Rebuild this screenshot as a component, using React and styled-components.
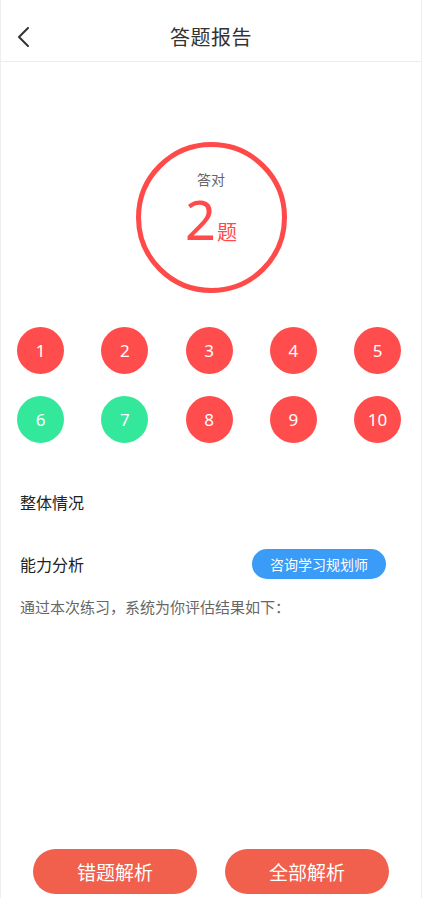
import React from 'react';
import styled, { createGlobalStyle } from 'styled-components';

const GlobalStyle = createGlobalStyle`
  html, body {
    margin: 0;
    padding: 0;
    background: #fff;
    font-family: "Noto Sans CJK SC", "Noto Sans", sans-serif;
  }
  * { box-sizing: border-box; }
`;

const results = [
  { n: 1, ok: false },
  { n: 2, ok: false },
  { n: 3, ok: false },
  { n: 4, ok: false },
  { n: 5, ok: false },
  { n: 6, ok: true },
  { n: 7, ok: true },
  { n: 8, ok: false },
  { n: 9, ok: false },
  { n: 10, ok: false },
];

function App() {
  const correct = results.filter((r) => r.ok).length;
  return (
    <Page>
      <GlobalStyle />
      <Header>
        <Back>
          <svg width="14" height="22" viewBox="0 0 14 22" fill="none">
            <path d="M12 2L3 11l9 9" stroke="#333" strokeWidth="2" strokeLinecap="round" strokeLinejoin="round" />
          </svg>
        </Back>
        <Title>答题报告</Title>
      </Header>

      <ScoreWrap>
        <Ring>
          <RingLabel>答对</RingLabel>
          <Score>
            <Big>{correct}</Big>
            <Unit>题</Unit>
          </Score>
        </Ring>
      </ScoreWrap>

      <Balls>
        {results.map((r) => (
          <Ball key={r.n} ok={r.ok}>{r.n}</Ball>
        ))}
      </Balls>

      <Section>整体情况</Section>

      <Row>
        <Section as="span">能力分析</Section>
        <Consult>咨询学习规划师</Consult>
      </Row>

      <Desc>通过本次练习，系统为你评估结果如下：</Desc>

      <Spacer />

      <Footer>
        <ActionBtn>错题解析</ActionBtn>
        <ActionBtn>全部解析</ActionBtn>
      </Footer>
    </Page>
  );
}

const Page = styled.div`
  width: 422px;
  height: 898px;
  display: flex;
  flex-direction: column;
  border-left: 1px solid #eee;
  border-right: 1px solid #eee;
  overflow: hidden;
`;

const Header = styled.div`
  height: 62px;
  flex-shrink: 0;
  display: flex;
  align-items: center;
  justify-content: center;
  position: relative;
  padding-top: 12px;
  border-bottom: 1px solid #ececec;
`;

const Back = styled.div`
  position: absolute;
  left: 15px;
  top: 26px;
  display: flex;
`;

const Title = styled.div`
  font-size: 20px;
  color: #333;
  letter-spacing: 0.5px;
`;

const ScoreWrap = styled.div`
  display: flex;
  justify-content: center;
  padding-top: 80px;
`;

const Ring = styled.div`
  width: 151px;
  height: 151px;
  border-radius: 50%;
  border: 5px solid #ff4a4a;
  display: flex;
  flex-direction: column;
  align-items: center;
  padding-top: 22px;
`;

const RingLabel = styled.div`
  font-size: 14px;
  color: #666;
  line-height: 20px;
`;

const Score = styled.div`
  display: flex;
  align-items: baseline;
  color: #ff4a4a;
  margin-top: 5px;
`;

const Big = styled.span`
  font-family: "Noto Sans", sans-serif;
  font-size: 54px;
  line-height: 50px;
  font-weight: 400;
`;

const Unit = styled.span`
  font-size: 20px;
  line-height: 24px;
  margin-left: 1px;
`;

const Balls = styled.div`
  display: grid;
  grid-template-columns: repeat(5, 47px);
  justify-content: space-between;
  row-gap: 22px;
  padding: 34px 20px 0 16px;
`;

const Ball = styled.div`
  width: 47px;
  height: 47px;
  border-radius: 50%;
  background: ${(p) => (p.ok ? '#33e89a' : '#ff4d4d')};
  color: #fff;
  font-family: "Noto Sans", sans-serif;
  font-size: 17px;
  display: flex;
  align-items: center;
  justify-content: center;
`;

const Section = styled.div`
  font-size: 16px;
  color: #222;
  padding: 0 19px;
  margin-top: 47px;
  line-height: 24px;
`;

const Row = styled.div`
  display: flex;
  align-items: center;
  justify-content: space-between;
  padding-right: 35px;
  margin-top: 35px;

  ${Section} {
    margin-top: 0;
  }
`;

const Consult = styled.button`
  width: 134px;
  height: 30px;
  border: none;
  border-radius: 15px;
  background: #3a9cf6;
  color: #fff;
  font-family: "Noto Sans CJK SC", sans-serif;
  font-size: 14px;
  padding: 0;
`;

const Desc = styled.div`
  font-size: 15px;
  color: #666;
  padding: 0 19px;
  margin-top: 16px;
  line-height: 24px;
`;

const Spacer = styled.div`
  flex: 1;
`;

const Footer = styled.div`
  display: flex;
  justify-content: space-between;
  padding: 0 32px 4px 32px;
`;

const ActionBtn = styled.button`
  width: 164px;
  height: 45px;
  border: none;
  border-radius: 23px;
  background: #f0604c;
  color: #fff;
  font-family: "Noto Sans CJK SC", sans-serif;
  font-size: 19px;
  padding: 0;
`;

export default App;
